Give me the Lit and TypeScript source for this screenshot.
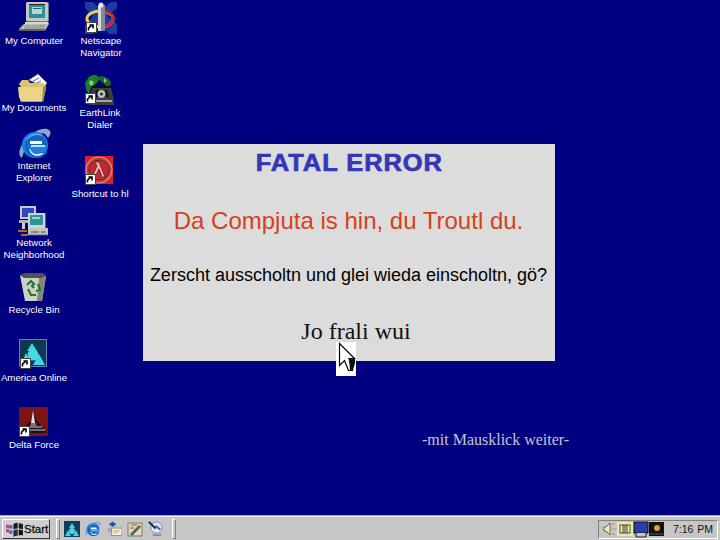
import { LitElement, html, css, svg } from "lit";
import { customElement } from "lit/decorators.js";

const arrow = svg`<g><rect x="0" y="0" width="11" height="11" fill="#fff"/><rect x="0.5" y="0.5" width="10" height="10" fill="#fff" stroke="#444" stroke-width="1"/><path d="M2.5 8.5V6.2L6 3M3.5 3H7V6.5" fill="none" stroke="#000" stroke-width="1.6"/></g>`;

const computer = svg`<path d="M8 1h20l1 1v18H7V2z" fill="#c4c8c4"/><path d="M7 20l2 1h19l2-1V2l-1-1v19z" fill="#6f7b78"/><rect x="10" y="3" width="16" height="14" fill="#2f8f93"/><rect x="10" y="3" width="16" height="1" fill="#222"/><rect x="13" y="6" width="10" height="7" fill="#bcd3da"/><rect x="14" y="7" width="8" height="1" fill="#2b5c80"/><path d="M6 21h23l1 2H6z" fill="#d4d6d2"/><path d="M0 28l5-5h25l-3 5z" fill="#b8bcb8"/><path d="M0 28h27v2H0z" fill="#5d6662"/><path d="M7 25h19M5.500 27h20" stroke="#5b625e" stroke-dasharray="1 1"/>`;
const netscape = svg`<rect width="32" height="32" fill="#000f80"/><path d="M0 0l8 0 8 8 10-8h6v6L22 14l10 8v10h-8L16 22 8 32H0V24l8-10L0 6z" fill="#2c4fb0" opacity=".7"/><ellipse cx="15" cy="17" rx="13" ry="8" fill="none" stroke="#e8d24a" stroke-width="3"/><path d="M14 9.500c9-1 14 2 14 7s-5 8-12 8" fill="none" stroke="#c9242a" stroke-width="3"/><rect x="13" y="3" width="7" height="26" fill="#d8dadf"/><rect x="16" y="3" width="4" height="26" fill="#8189a0"/><circle cx="16" cy="3" r="2.500" fill="#e8e8e8"/>`;
const folder = svg`<path d="M11 9l9-6 9 9-3 4z" fill="#f4f4f4" stroke="#8a8a80" stroke-width=".8"/><path d="M15 10l6-3M17 13l6-3" stroke="#5d6f95"/><path d="M1 13l3-4h6l2 3h13l2 2v2H3z" fill="#dcc36a"/><path d="M0 16h25l3-2v3l-3 14H3L1 26z" fill="#e9d585"/><path d="M25 31l3-14v-3l-3 2-1 15z" fill="#9b8a43"/><path d="M2 31h23" stroke="#7a6c33"/>`;
const earthlink = svg`<path d="M6 3c5-4 11-1 11 2l-4 5-5 3-2 7-3-4-1-7z" fill="#1c7c28"/><path d="M17 2c5 0 11 3 11 8l-3 3-5-4-4-4z" fill="#1b6a2a"/><path d="M7 6l4 2-2 4-3-2zM21 4l3 3-3 2z" fill="#7ed676"/><rect x="8" y="12" width="21" height="3" rx="1.500" fill="#101410"/><path d="M9 14h19l3 12v5H6v-5z" fill="#3b3e40"/><path d="M13 16h11l2 7H11z" fill="#111"/><circle cx="18.500" cy="20" r="4" fill="#b9c0c2"/><circle cx="18.500" cy="20" r="1.500" fill="#2c2f30"/><path d="M8 26h21v2H8z" fill="#a4a7a7"/>`;
const ie = svg`<path d="M3 30c-6-3-1-15 7-22 7-6 16-9 20-6 3 2 1 6-1 8l-3-4c-4-2-17 3-23 24z" fill="#8aa7c4"/><circle cx="16" cy="17" r="13" fill="#1a7fe0"/><path d="M7 12c3-5 9-8 15-5l5 8c-6-3-14-3-20-3z" fill="#6db6ff"/><path d="M9 17h19c0-6-4-10-10-10-6 0-12 4-12 11 0 7 5 12 12 12 4 0 8-2 10-6h-7c-1 1-2 1-3 1-4 0-8-3-9-8z" fill="#1262c8"/><rect x="11" y="13" width="12" height="3" fill="#fff"/><path d="M12 18h14" stroke="#fff" stroke-width="1.500"/><path d="M11 21c1 3 4 5 7 5 2 0 3-1 4-1h3c-2 2-4 3-7 3-4 0-7-3-8-7z" fill="#d7ecff"/>`;
const hl = svg`<rect x="0" y="0" width="28" height="28" fill="#e0201f"/><circle cx="14" cy="14" r="13" fill="#b84444" stroke="#e58a8a" stroke-width="1.200"/><circle cx="14" cy="14" r="10" fill="#c32a2e" stroke="#7b1f22"/><path d="M10 6h4l6 15h-3l-3-8-4 8H7l5-11-1-2h-1z" fill="#e8b0b0" stroke="#5e0c10" stroke-width=".7"/>`;
const network = svg`<path d="M2 2h16v13H2z" fill="#c6c8ce"/><rect x="4" y="4" width="12" height="9" fill="#3344c0"/><rect x="1" y="16" width="18" height="3" fill="#b0b2b0"/><path d="M4 19h3v6H4z" fill="#ccc"/><path d="M10 9h17v15H10z" fill="#d0d4d0"/><rect x="12" y="11" width="13" height="10" fill="#2f9496"/><path d="M14 13h8v2h-8z" fill="#9ad6d4"/><path d="M27 9v15h1V10z" fill="#5c6462"/><path d="M10 24h20v7H10z" fill="#c4c6c2"/><path d="M13 28h8M23 28h5" stroke="#4a4f4c"/><path d="M0 27h9M3 31h7" stroke="#e08a20" stroke-width="1.500"/><path d="M10 31h20" stroke="#5d6662"/>`;
const recycle = svg`<path d="M1 3l5-2h18l3 3-4 2H5z" fill="#4f5350"/><path d="M1 3l4 3h18l4-2-4 25H6z" fill="#d2d2c4"/><path d="M20 6h3l4-2-4 25h-5z" fill="#85867c"/><path d="M8 13l4-4 3 3-2 2 2 2M19 12l2 6-4 1M9 17l3 6 5 0" fill="none" stroke="#1d7a2e" stroke-width="2.200"/>`;
const aol = svg`<rect x=".5" y=".5" width="27" height="27" fill="#10384f" stroke="#5c7fc4"/><path d="M13 4l5 8h-4l-6 0z" fill="#3fd6e0"/><path d="M7 14l-5 11h10z" fill="#3fd6e0"/><path d="M20 15l6 11H14z" fill="#3fd6e0"/><circle cx="14" cy="16" r="5.500" fill="#44dbe5"/>`;
const delta = svg`<rect width="29" height="29" fill="#7c1414"/><path d="M14 3l3 10 11 13H2l10-13z" fill="#161020"/><path d="M14 3l2 13h-4z" fill="#e9dada"/><path d="M6 23h20M9 20h14" stroke="#cfcfcf" stroke-width="1"/><path d="M12 16h5l1 4h-7z" fill="#8a6a6a"/>`;

interface Item { x: number; y: number; w: number; h: number; vb: string; shape: unknown; labels: string[]; cx: number; ly: number; sx?: number; sy?: number; }
const items: Item[] = [
  { x: 19, y: 1, w: 30, h: 31, vb: "0 0 30 31", shape: computer, labels: ["My Computer"], cx: 34, ly: 35 },
  { x: 85, y: 2, w: 32, h: 32, vb: "0 0 32 32", shape: netscape, labels: ["Netscape", "Navigator"], cx: 101, ly: 35, sx: 86, sy: 22 },
  { x: 18, y: 71, w: 30, h: 31, vb: "0 0 30 31", shape: folder, labels: ["My Documents"], cx: 34, ly: 102 },
  { x: 83, y: 74, w: 32, h: 32, vb: "0 0 32 32", shape: earthlink, labels: ["EarthLink", "Dialer"], cx: 100, ly: 107, sx: 85, sy: 93 },
  { x: 19, y: 128, w: 32, h: 32, vb: "0 0 32 32", shape: ie, labels: ["Internet", "Explorer"], cx: 34, ly: 160 },
  { x: 85, y: 156, w: 28, h: 28, vb: "0 0 28 28", shape: hl, labels: ["Shortcut to hl"], cx: 100, ly: 188, sx: 85, sy: 174 },
  { x: 18, y: 204, w: 30, h: 32, vb: "0 0 30 32", shape: network, labels: ["Network", "Neighborhood"], cx: 34, ly: 237 },
  { x: 19, y: 272, w: 28, h: 30, vb: "0 0 28 30", shape: recycle, labels: ["Recycle Bin"], cx: 34, ly: 304 },
  { x: 19, y: 339, w: 28, h: 28, vb: "0 0 28 28", shape: aol, labels: ["America Online"], cx: 34, ly: 372, sx: 20, sy: 358 },
  { x: 19, y: 407, w: 29, h: 29, vb: "0 0 29 29", shape: delta, labels: ["Delta Force"], cx: 34, ly: 439, sx: 19, sy: 426 },
];

@customElement("app-root")
export class AppRoot extends LitElement {
  static styles = css`
    :host { display: block; width: 720px; height: 540px; overflow: hidden; position: relative; background: #000080; font-family: "Liberation Sans", Arial, sans-serif; }
    .icon { position: absolute; display: block; }
    .sc { position: absolute; display: block; }
    .label { position: absolute; transform: translateX(-50%); width: 90px; text-align: center; color: #fff; font-size: 9.700px; line-height: 12px; white-space: nowrap; }
    .dialog { position: absolute; left: 143px; top: 144px; width: 412px; height: 217px; background: #dcdcdc; display: flex; flex-direction: column; align-items: center; box-sizing: border-box; padding-top: 5px; white-space: nowrap; }
    .fatal { font-size: 24px; line-height: 28px; font-weight: 700; color: #3636b8; letter-spacing: .9px; -webkit-text-stroke: .7px #3636b8; transform: scaleX(1.06); }
    .da { font-size: 24px; line-height: 26px; color: #d8401c; margin-top: 31px; margin-left: -1px; }
    .zer { font-size: 18px; line-height: 20px; color: #000; margin-top: 31px; margin-left: -1px; }
    .jo { font-family: "Liberation Serif", "Times New Roman", serif; font-size: 24px; line-height: 28px; color: #111; margin-top: 32px; margin-left: 14px; }
    .cursor { position: absolute; left: 336px; top: 342px; display: block; }
    .weiter { position: absolute; left: 422px; top: 431px; font-family: "Liberation Serif", "Times New Roman", serif; font-size: 16px; line-height: 18px; color: #c4c4d8; white-space: nowrap; }
    .taskbar { position: absolute; left: 0; right: 0; bottom: 0; height: 25px; box-sizing: border-box; background: #c6c6c6; border-top: 1px solid #a8a8b8; box-shadow: inset 0 1px 0 #f2f2f2; display: flex; align-items: center; padding: 2px 2px 0 2px; }
    .start { width: 48px; height: 20px; box-sizing: border-box; background: #cfcfcf; border: 1px solid; border-color: #fff #333 #333 #fff; display: flex; align-items: center; gap: 0; padding-left: 2px; font-size: 11.500px; color: #111; -webkit-text-stroke: .3px #111; flex: none; }
    .grip { width: 2px; height: 18px; border: 1px solid; border-color: #fff #808080 #808080 #fff; flex: none; }
    .gripA { margin-left: 6px; }
    .ql { display: flex; gap: 5px; margin-left: 4px; align-items: center; flex: none; }
    .ql svg { display: block; }
    .gripB { margin-left: 8px; }
    .spacer { flex: 1; }
    .tray { width: 120px; height: 19px; box-sizing: border-box; border: 1px solid; border-color: #808080 #fff #fff #808080; display: flex; align-items: center; padding-left: 2px; flex: none; }
    .tray svg { display: block; flex: none; }
    .clock { font-size: 10.500px; color: #111; margin-left: 9px; white-space: nowrap; word-spacing: 1px; }
  `;

  render() {
    return html`
      ${items.map(
        (i) => html`
          <svg class="icon" style="left:${i.x}px;top:${i.y}px" width=${i.w} height=${i.h} viewBox=${i.vb}>${i.shape}</svg>
          ${i.sx !== undefined
            ? html`<svg class="sc" style="left:${i.sx}px;top:${i.sy}px" width="11" height="11" viewBox="0 0 11 11">${arrow}</svg>`
            : ""}
          <div class="label" style="left:${i.cx}px;top:${i.ly}px">${i.labels.map((l) => html`<div>${l}</div>`)}</div>
        `,
      )}
      <div class="dialog">
        <div class="fatal">FATAL ERROR</div>
        <div class="da">Da Compjuta is hin, du Troutl du.</div>
        <div class="zer">Zerscht ausscholtn und glei wieda einscholtn, gö?</div>
        <div class="jo">Jo frali wui</div>
      </div>
      <svg class="cursor" width="20" height="34" viewBox="0 0 20 34">
        <rect width="20" height="34" fill="#fff"/>
        <path d="M3.500 1.500V23.500L8.500 18.500L12.500 28.500L16.500 28.500L13 16.500H18.500z" fill="#fff" stroke="#000" stroke-width="1.200"/>
        <path d="M13 17h6v4l-2 7h-3z" fill="#111"/>
      </svg>
      <div class="weiter">-mit Mausklick weiter-</div>
      <div class="taskbar">
        <div class="start">
          <svg width="19" height="15" viewBox="0 0 18 14">
            <path d="M1 3c1-1 2-1 3 0v3c-1-1-2-1-3 0zM1 7c1-1 2-1 3 0v3c-1-1-2-1-3 0z" fill="#c8408c"/>
            <path d="M4 3c1 0 2 0 3 0v3H4zM4 8h3v3H4z" fill="#3a62c0"/>
            <path d="M8 2c1-1 3-2 4-1v5c-1 0-3 0-4 1z" fill="#1a1a1a"/><path d="M13 1c1 0 3 0 4 1v5c-1-1-3-1-4-1z" fill="#1a1a1a"/>
            <path d="M8 8c1-1 3-1 4-1v6c-1 0-3 0-4 1z" fill="#2a2a2a"/><path d="M13 7c1 0 3 0 4 1v5c-1-1-3-1-4 0z" fill="#111"/>
          </svg>
          <span>Start</span>
        </div>
        <div class="grip gripA"></div>
        <div class="ql">
          <svg width="16" height="16" viewBox="0 0 16 16"><rect width="16" height="16" fill="#123d5c"/><path d="M8 2l3 5H5zM4 9L1 15h6zM12 9l3 6H9z" fill="#3fd6e0"/><circle cx="8" cy="10" r="3" fill="#44dbe5"/></svg>
          <svg width="16" height="16" viewBox="0 0 32 32">${ie}</svg>
          <svg width="16" height="16" viewBox="0 0 17 16"><path d="M1 8l5-1 2 3-5 2z" fill="#9aa2b0"/><path d="M3 3l4-3 4 3-4 3z" fill="#2a4fb0"/><rect x="6" y="7" width="11" height="8" fill="#f3f1e4" stroke="#888"/><path d="M8 10h7M8 12h4" stroke="#c9a93a"/></svg>
          <svg width="16" height="16" viewBox="0 0 16 16"><rect x="1" y="2" width="14" height="13" fill="#e7d9a8" stroke="#6b7e80"/><path d="M3 13l9-9 2 2-9 9z" fill="#3f6f74"/><path d="M4 4h6M3 7h4" stroke="#b04a2a"/></svg>
          <svg width="16" height="16" viewBox="0 0 17 17"><circle cx="9" cy="7" r="6" fill="#dfe6f0" stroke="#7a8bb0"/><path d="M1 1l7 7" stroke="#141a50" stroke-width="2"/><path d="M5 14h9v2H5z" fill="#8a8a8a"/><path d="M8 5l5 4" stroke="#2a60b0" stroke-width="2"/></svg>
        </div>
        <div class="grip gripB"></div>
        <div class="spacer"></div>
        <div class="tray">
          <svg width="16" height="16" viewBox="0 0 16 16"><path d="M3 6h2l4-4v12l-4-4H3z" fill="#f4f0b0" stroke="#444" stroke-width=".8"/><path d="M11 4l3-2M11 8h4M11 12l3 2" stroke="#9a9a9a"/></svg>
          <svg width="16" height="16" viewBox="0 0 16 16"><rect x="0" y="1" width="16" height="14" fill="#eee7a0"/><rect x="3" y="4" width="10" height="8" fill="#f6f2c8" stroke="#4a4a20"/><path d="M6 4v8M8 4v8M10 4v8" stroke="#333"/></svg>
          <svg width="16" height="17" viewBox="0 0 16 17"><rect x="1" y="1" width="14" height="11" fill="#2a3db0" stroke="#111"/><path d="M3 12v4h10v-4" fill="#c4c4c4" stroke="#222"/></svg>
          <svg width="15" height="14" viewBox="0 0 15 14"><rect width="15" height="14" fill="#111"/><circle cx="8" cy="6" r="3" fill="#e0a030"/><path d="M0 12h15" stroke="#555"/></svg>
          <span class="clock">7:16 PM</span>
        </div>
      </div>
    `;
  }
}
